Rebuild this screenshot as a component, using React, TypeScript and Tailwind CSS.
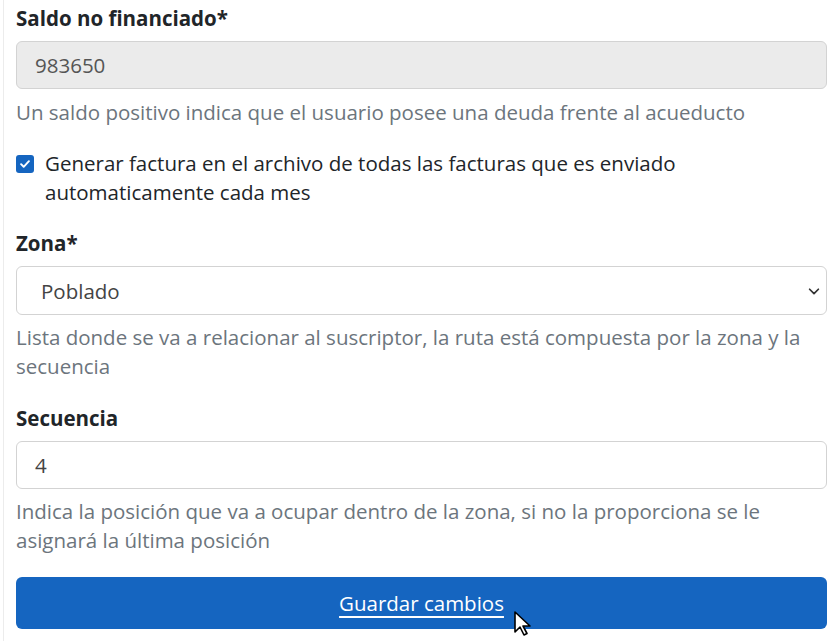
export default function App() {
  return (
    <div className="min-h-[641px] w-[838px] bg-white font-['Open_Sans',sans-serif] text-[20.5px] leading-[30px] text-[#212529]">
      <div className="ml-[3px] min-h-[641px] border-l border-[#ececec] pl-[12px] pr-[11px] pt-[3px]">
        <label className="block font-bold">Saldo no financiado*</label>
        <div className="mt-[8px] flex h-[48px] items-center rounded-[6px] border border-[#d3d3d3] bg-[#ebebeb] px-[18px] text-[#555]">
          983650
        </div>
        <p className="mt-[8px] text-[#6c757d]">
          Un saldo positivo indica que el usuario posee una deuda frente al acueducto
        </p>

        <div className="mt-[22px] flex items-start gap-[11px]">
          <span className="mt-[6px] flex h-[18px] w-[18px] shrink-0 items-center justify-center rounded-[3px] bg-[#1565c0]">
            <svg viewBox="0 0 16 16" className="h-[14px] w-[14px]">
              <path d="M3.5 8.2l3 3 6-6.4" fill="none" stroke="#fff" strokeWidth="2.2" strokeLinecap="round" strokeLinejoin="round" />
            </svg>
          </span>
          <p className="leading-[29px]">
            Generar factura en el archivo de todas las facturas que es enviado automaticamente cada mes
          </p>
        </div>

        <label className="mt-[21px] block font-bold">Zona*</label>
        <div className="mt-[8px] flex h-[49px] items-center justify-between rounded-[6px] border border-[#d3d3d3] bg-white pl-[24px] pr-[5px] text-[#444]">
          <span>Poblado</span>
          <svg viewBox="0 0 16 16" className="h-[14px] w-[14px]">
            <path d="M3 6l5 5 5-5" fill="none" stroke="#333" strokeWidth="2" strokeLinecap="round" strokeLinejoin="round" />
          </svg>
        </div>
        <p className="mt-[8px] leading-[29px] text-[#6c757d]">
          Lista donde se va a relacionar al suscriptor, la ruta está compuesta por la zona y la secuencia
        </p>

        <label className="mt-[22px] block font-bold">Secuencia</label>
        <div className="mt-[8px] flex h-[48px] items-center rounded-[6px] border border-[#d3d3d3] bg-white px-[18px] text-[#444]">
          4
        </div>
        <p className="mt-[8px] leading-[29px] text-[#6c757d]">
          Indica la posición que va a ocupar dentro de la zona, si no la proporciona se le asignará la última posición
        </p>

        <div className="relative mt-[22px]">
          <button className="flex h-[52px] w-full items-center justify-center rounded-[6px] bg-[#1565c0] text-white underline decoration-[2px] underline-offset-[5px]">
            Guardar cambios
          </button>
          <svg viewBox="0 0 20 28" className="absolute left-[497px] top-[33px] h-[28px] w-[20px]">
            <path d="M2 2v20l5-5 4 8 3-1.5-4-7.5h7z" fill="#fff" stroke="#000" strokeWidth="1.6" strokeLinejoin="round" />
          </svg>
        </div>
      </div>
    </div>
  );
}
